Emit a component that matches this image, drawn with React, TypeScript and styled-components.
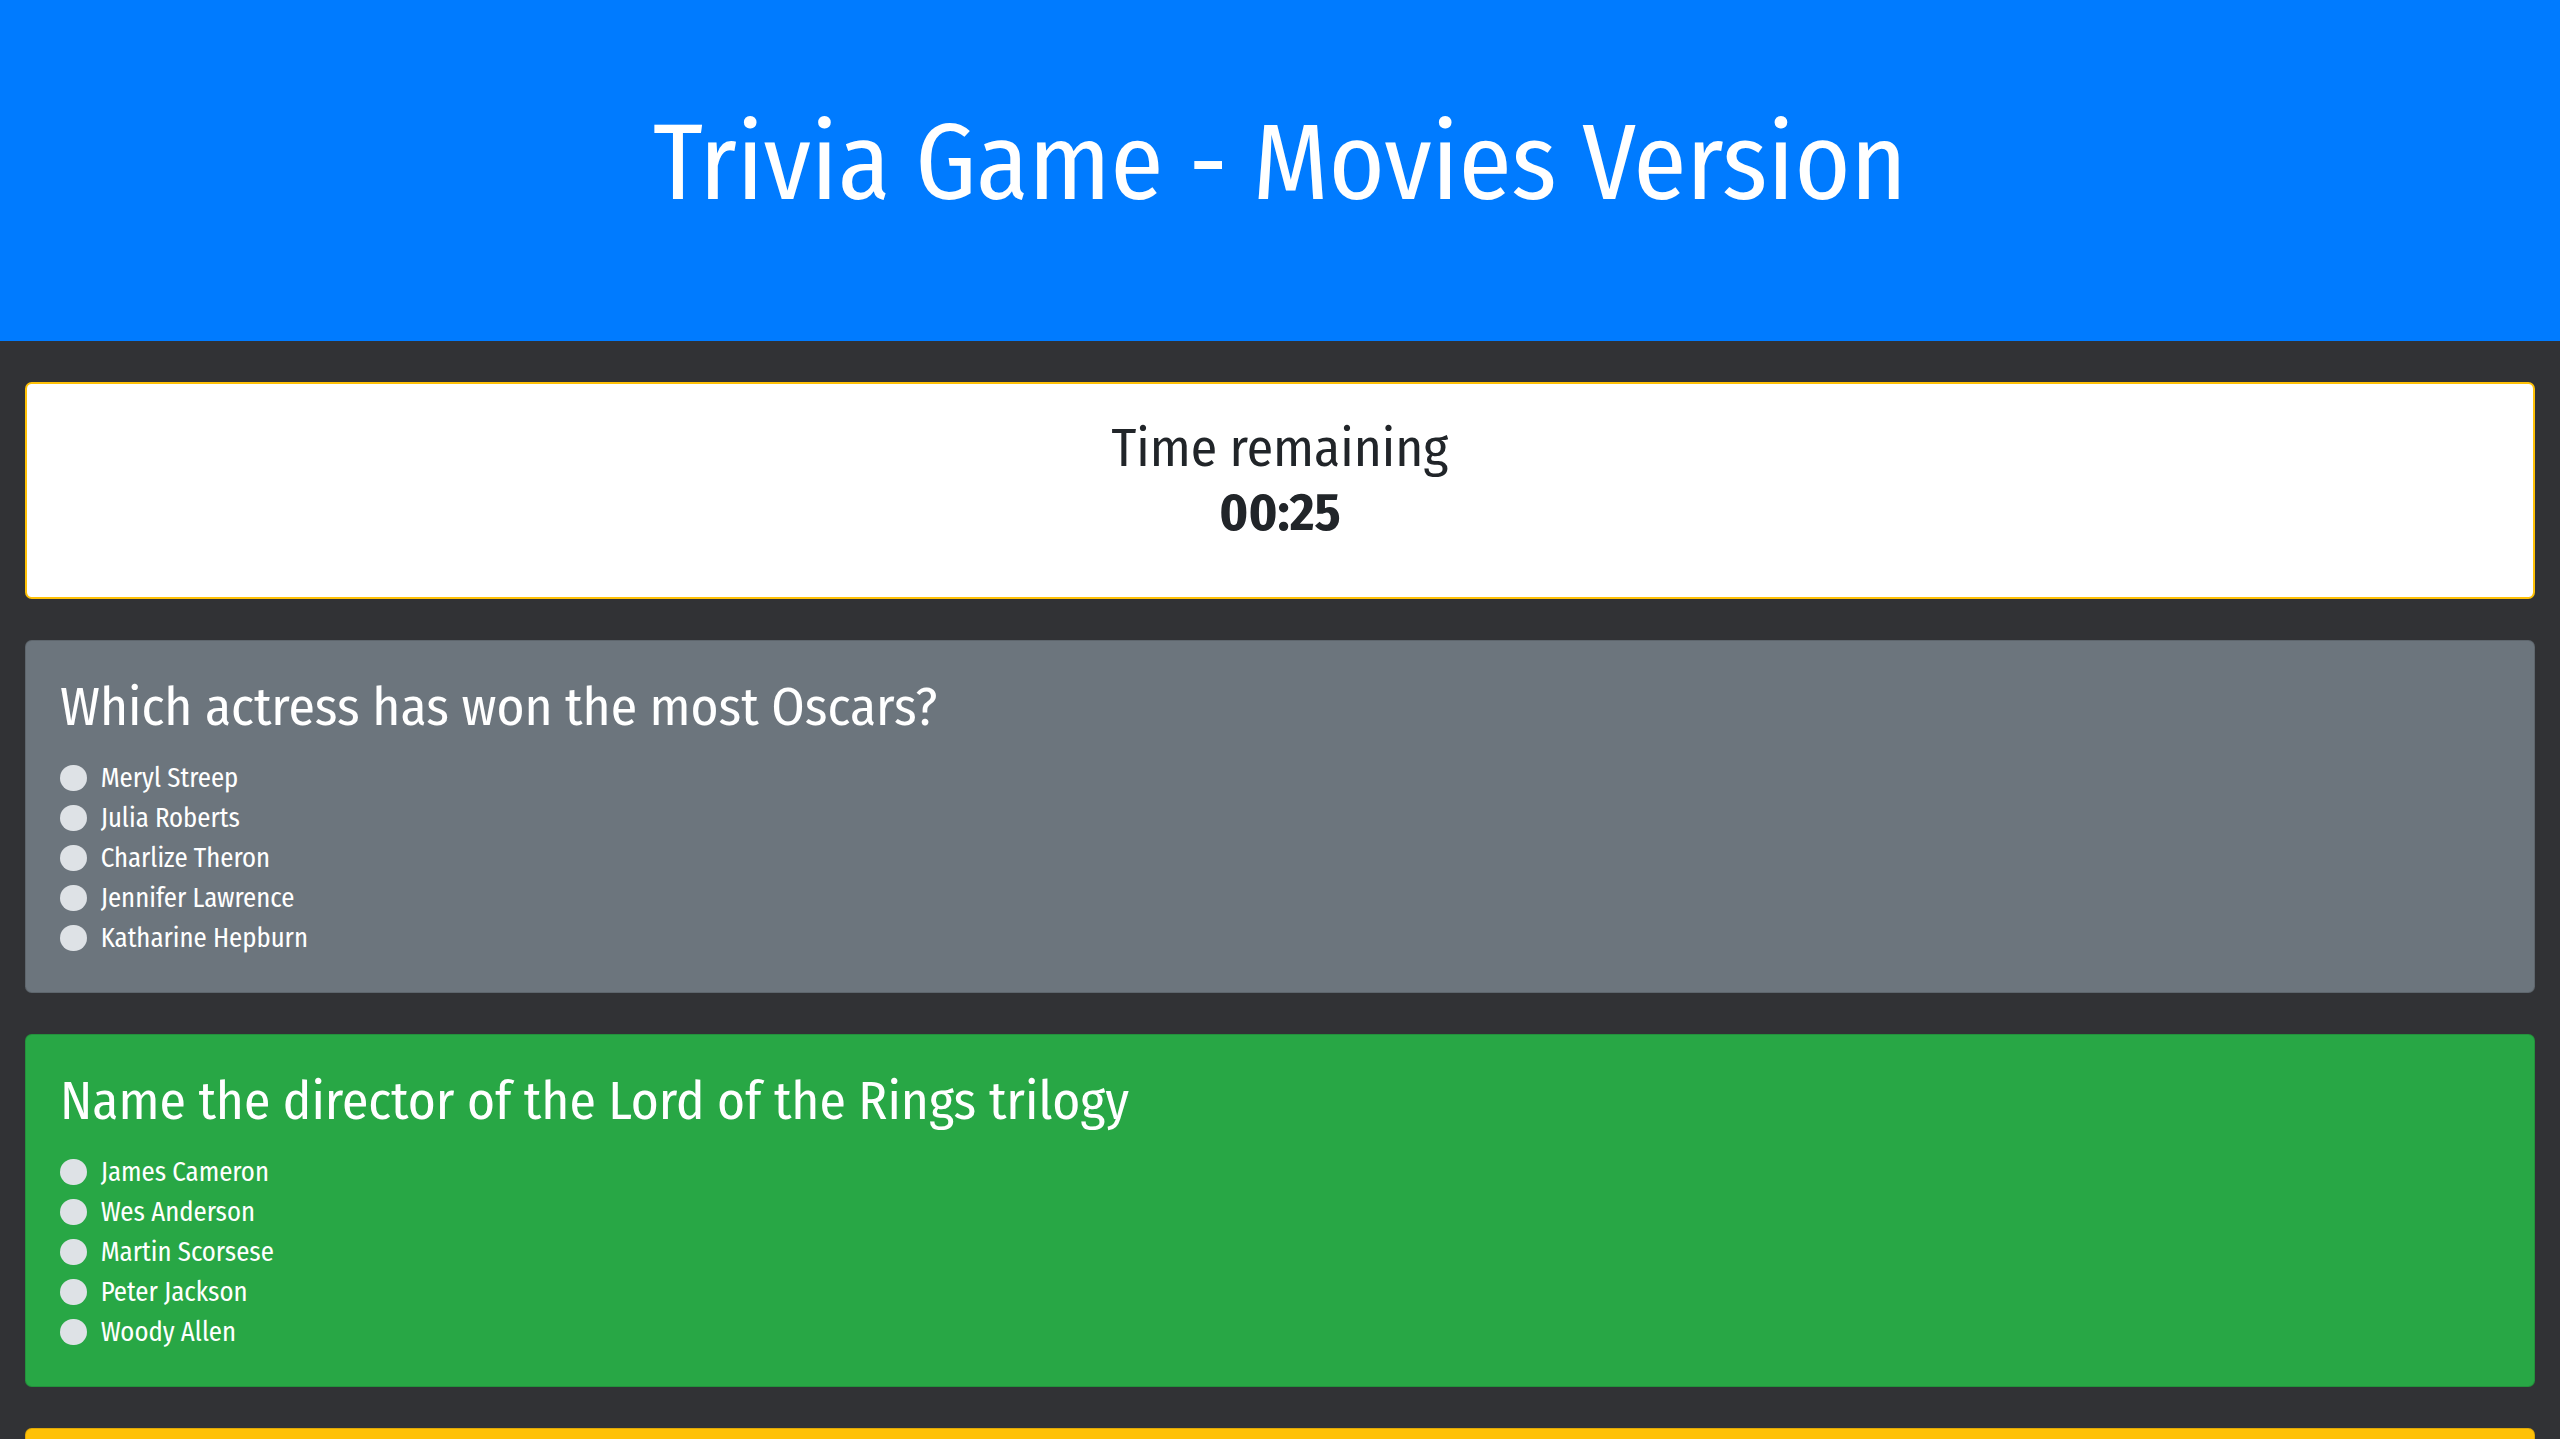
import React from "react";
import styled, { createGlobalStyle } from "styled-components";

const GlobalStyle = createGlobalStyle`
  html, body {
    margin: 0;
    padding: 0;
    background: #313235;
  }
  body {
    font-family: "Fira Sans Condensed", "Roboto Condensed", "Liberation Sans Narrow", sans-serif;
    font-size: 26.67px;
    line-height: 1.5;
    color: #212529;
  }
  * { box-sizing: border-box; }
`;

const Header = styled.header`
  background: #007bff;
  height: 341px;
  padding-top: 99px;
  text-align: center;
`;

const Title = styled.h1`
  margin: 0;
  font-size: 106.67px;
  font-weight: 400;
  line-height: 1.2;
  color: #ffffff;
`;

const Main = styled.main`
  display: flex;
  flex-direction: column;
  gap: 41px;
  padding: 41px 25px 40px;
`;

type Tone = "light" | "secondary" | "success" | "warning";

const toneBg: Record<Tone, string> = {
  light: "#ffffff",
  secondary: "#6c757d",
  success: "#28a745",
  warning: "#ffc107",
};

const Card = styled.section<{ $tone: Tone; $outlined?: boolean }>`
  background: ${(p) => toneBg[p.$tone]};
  border: ${(p) => (p.$outlined ? "2px solid #ffc107" : "1px solid rgba(0, 0, 0, 0.125)")};
  border-radius: 6.67px;
  padding: 34px 33px 34px 34px;
  color: ${(p) => (p.$tone === "light" || p.$tone === "warning" ? "#212529" : "#ffffff")};
`;

const TimerCard = styled(Card)`
  text-align: center;
  padding: 32px 33px 53px;
`;

const TimerLine = styled.h2<{ $bold?: boolean }>`
  margin: 0;
  font-size: 53.33px;
  line-height: 64px;
  font-weight: ${(p) => (p.$bold ? 700 : 400)};
`;

const Question = styled.h2`
  margin: 0 0 19px;
  font-size: 53.33px;
  line-height: 64px;
  font-weight: 400;
`;

const Options = styled.div`
  display: flex;
  flex-direction: column;
`;

const Option = styled.label`
  display: flex;
  align-items: flex-start;
  gap: 14px;
  min-height: 40px;
  line-height: 40px;
  font-size: 26.67px;
  font-weight: 400;
  cursor: pointer;
`;

const Radio = styled.span`
  flex: none;
  width: 26.67px;
  height: 26.67px;
  margin-top: 6.67px;
  border-radius: 50%;
  background: #dee2e6;
`;

const questions: { q: string; tone: Tone; answers: string[] }[] = [
  {
    q: "Which actress has won the most Oscars?",
    tone: "secondary",
    answers: ["Meryl Streep", "Julia Roberts", "Charlize Theron", "Jennifer Lawrence", "Katharine Hepburn"],
  },
  {
    q: "Name the director of the Lord of the Rings trilogy",
    tone: "success",
    answers: ["James Cameron", "Wes Anderson", "Martin Scorsese", "Peter Jackson", "Woody Allen"],
  },
  {
    q: "Which movie won the first Academy Award for Best Picture?",
    tone: "warning",
    answers: ["Wings", "Sunrise", "The Jazz Singer", "Metropolis", "The Circus"],
  },
];

export default function App() {
  return (
    <>
      <GlobalStyle />
      <Header>
        <Title>Trivia Game - Movies Version</Title>
      </Header>
      <Main>
        <TimerCard $tone="light" $outlined>
          <TimerLine>Time remaining</TimerLine>
          <TimerLine $bold>00:25</TimerLine>
        </TimerCard>
        {questions.map((item) => (
          <Card key={item.q} $tone={item.tone}>
            <Question>{item.q}</Question>
            <Options>
              {item.answers.map((a) => (
                <Option key={a}>
                  <Radio />
                  {a}
                </Option>
              ))}
            </Options>
          </Card>
        ))}
      </Main>
    </>
  );
}
